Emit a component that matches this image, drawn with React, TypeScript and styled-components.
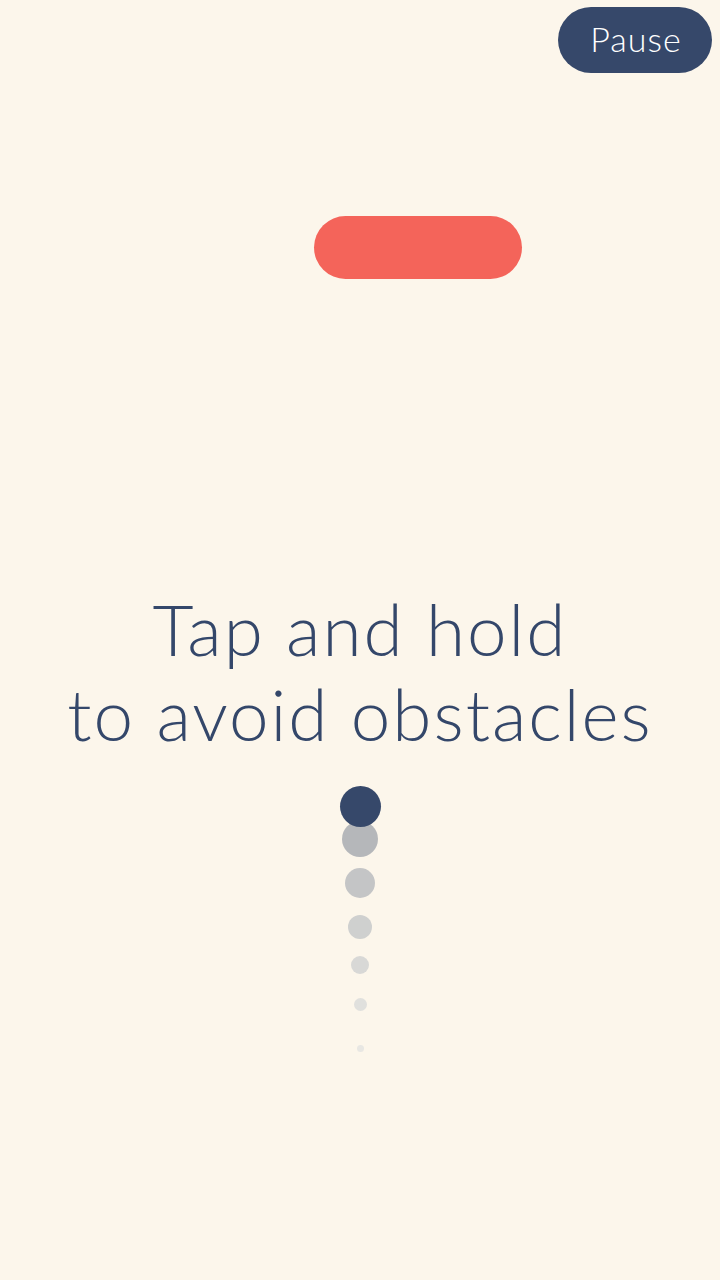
import React from 'react';
import styled, { createGlobalStyle } from 'styled-components';

const GlobalStyle = createGlobalStyle`
  html, body {
    margin: 0;
    padding: 0;
    background: #fcf6eb;
  }
  * {
    box-sizing: border-box;
  }
`;

interface ITrailDot {
  size: number;
  shade: string;
  gap: number;
}

const trail: ITrailDot[] = [
  { size: 36, shade: '#b5b7ba', gap: -6 },
  { size: 30, shade: '#c4c5c6', gap: 11 },
  { size: 24, shade: '#cfd0cf', gap: 17 },
  { size: 18, shade: '#d8d8d6', gap: 17 },
  { size: 13, shade: '#e0e0dd', gap: 24 },
  { size: 7, shade: '#e8e7e3', gap: 34 },
];

const App = () => {
  return (
    <>
      <GlobalStyle />
      <Screen>
        <TopBar>
          <PauseButton>Pause</PauseButton>
        </TopBar>
        <Obstacle />
        <Hint>
          Tap and hold
          <br />
          to avoid obstacles
        </Hint>
        <Trail>
          <Ball />
          {trail.map((dot, index) => (
            <Ghost key={index} size={dot.size} shade={dot.shade} gap={dot.gap} />
          ))}
        </Trail>
      </Screen>
    </>
  );
};

const Screen = styled.div`
  width: 720px;
  min-height: 1280px;
  background: #fcf6eb;
  display: flex;
  flex-direction: column;
  font-family: 'Lato', 'Open Sans', sans-serif;
  color: #34476a;
`;

const TopBar = styled.div`
  display: flex;
  justify-content: flex-end;
  padding: 7px 8px 0 0;
`;

const PauseButton = styled.button`
  width: 154px;
  height: 66px;
  border: none;
  border-radius: 33px;
  background: #36486a;
  color: #ffffff;
  font-family: 'Lato', sans-serif;
  font-weight: 300;
  font-size: 34px;
  letter-spacing: 1px;
  padding: 0 0 4px 2px;
  cursor: pointer;
`;

const Obstacle = styled.div`
  width: 208px;
  height: 63px;
  margin: 143px 0 0 314px;
  border-radius: 32px;
  background: #f4645a;
`;

const Hint = styled.h1`
  margin: 307px 0 0;
  text-align: center;
  font-family: 'Lato', sans-serif;
  font-weight: 300;
  font-size: 71px;
  line-height: 85px;
  letter-spacing: 2px;
`;

const Trail = styled.div`
  display: flex;
  flex-direction: column;
  align-items: center;
  margin-top: 30px;
`;

const Ball = styled.div`
  width: 41px;
  height: 41px;
  border-radius: 50%;
  background: #36486a;
  position: relative;
  z-index: 1;
`;

const Ghost = styled.div<{ size: number; shade: string; gap: number }>`
  width: ${({ size }) => size}px;
  height: ${({ size }) => size}px;
  margin-top: ${({ gap }) => gap}px;
  border-radius: 50%;
  background: ${({ shade }) => shade};
`;

export default App;
